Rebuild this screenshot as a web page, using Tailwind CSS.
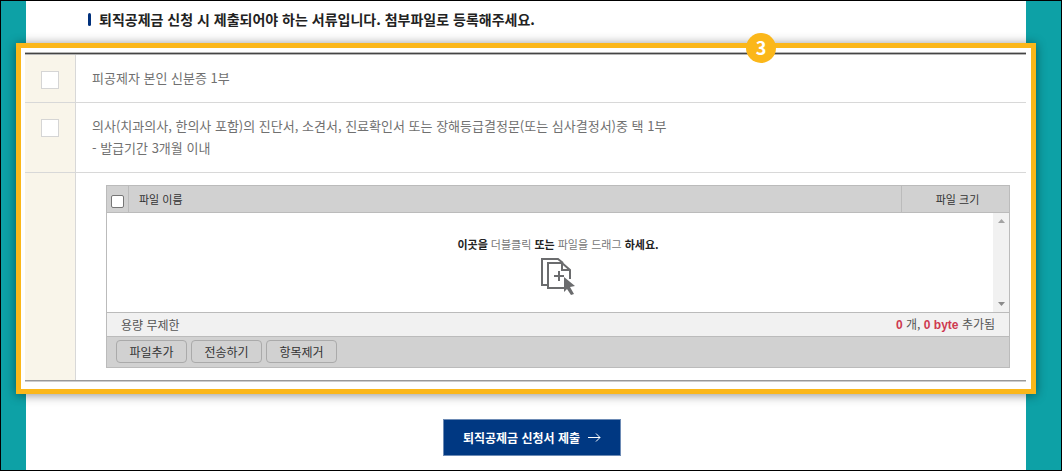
<!DOCTYPE html>
<html lang="ko">
<head>
    <meta charset="UTF-8">
    <meta name="viewport" content="width=device-width, initial-scale=1.0">
    <title>퇴직공제금 신청</title>
    <script src="https://cdn.jsdelivr.net/npm/@tailwindcss/browser@4"></script>
</head>
<body class="flex min-h-screen border border-black bg-[#0da1a6] pr-[35px] pl-[25px] font-['Noto_Sans_CJK_KR',sans-serif] text-[13px] text-[#707070]">
    <main class="flex-1 bg-white">
        <h2 class="flex h-[42px] items-center pb-1.5 pl-[62px] text-sm font-bold text-[#222]">
            <span class="mr-2 h-[13px] w-[3px] rounded-xs bg-[#00307c]"></span>
            퇴직공제금 신청 시 제출되어야 하는 서류입니다. 첨부파일로 등록해주세요.
        </h2>

        <!-- Required documents -->
        <section class="relative -mx-[10px] border-5 border-[#fbb71a] bg-white pt-1 pr-[5px] pb-[7px] pl-1 shadow-[0_1px_10px_rgba(0,0,0,0.45)]">
            <span class="absolute -top-[15px] right-[255px] flex size-[30px] items-center justify-center rounded-full bg-[#fbb71a] pb-0.5 text-lg font-bold text-white">3</span>

            <div class="border-y border-t-[#b5b5b5] border-b-[#ccc]">
                <div class="border-y border-t-[#444] border-b-[#999]">
                    <table class="w-full border-separate border-spacing-0 border-t border-[#b5b5b5]">
                        <tbody>
                            <tr class="h-12">
                                <td class="w-[51px] border-r border-b border-[#d8d8d8] bg-[#f9f5ea] align-top">
                                    <input id="doc-id" type="checkbox" class="mx-auto mt-4 block size-[18px] appearance-none border border-[#d5d5d5] bg-white">
                                </td>
                                <td class="border-b border-[#d8d8d8] pb-0.5 pl-4"><label for="doc-id">피공제자 본인 신분증 1부</label></td>
                            </tr>
                            <tr class="h-[70px]">
                                <td class="border-r border-b border-[#d8d8d8] bg-[#f9f5ea] align-top">
                                    <input id="doc-medical" type="checkbox" class="mx-auto mt-4 block size-[18px] appearance-none border border-[#d5d5d5] bg-white">
                                </td>
                                <td class="border-b border-[#d8d8d8] pb-0.5 pl-4 leading-[22px]">
                                    <label for="doc-medical">의사(치과의사, 한의사 포함)의 진단서, 소견서, 진료확인서 또는 장해등급결정문(또는 심사결정서)중 택 1부<br>- 발급기간 3개월 이내</label>
                                </td>
                            </tr>
                            <tr>
                                <td class="border-r border-[#d8d8d8] bg-[#f9f5ea]"></td>
                                <td class="pt-3 pr-4 pb-3 pl-[30px]">
                                    <!-- File uploader -->
                                    <div class="border border-[#bbb] text-xs leading-4 text-[#555]">
                                        <table class="w-full border-separate border-spacing-0 bg-[#d1d1d1] text-[11px] text-[#333]">
                                            <thead>
                                                <tr class="h-[27px]">
                                                    <th class="w-[22px] border-r border-b border-[#bbb]">
                                                        <input type="checkbox" aria-label="전체 선택" class="mx-auto mt-1 block size-[13px] appearance-none rounded-xs border border-[#767676] bg-white">
                                                    </th>
                                                    <th class="border-b border-[#bbb] pl-[10px] text-left font-normal">파일 이름</th>
                                                    <th class="w-[108px] border-b border-l border-[#bbb] pl-1 font-normal">파일 크기</th>
                                                </tr>
                                            </thead>
                                        </table>
                                        <div class="flex h-[99px]">
                                            <div class="flex flex-1 flex-col items-center pt-[23px] pl-4">
                                                <p class="text-[11px] text-[#777]"><b class="text-[#222]">이곳을</b> 더블클릭 <b class="text-[#222]">또는</b> 파일을 드래그 <b class="text-[#222]">하세요.</b></p>
                                                <svg class="mt-1 h-10 w-9" viewBox="0 0 36 40" fill="none" stroke="#6b6c6e" stroke-width="2">
                                                    <path d="M7 29H2V3H18L23 7"/>
                                                    <path d="M24 32H8V7H22L30 14V23"/>
                                                    <path d="M22 7V14H30M14 20H24M19 15V25"/>
                                                    <path d="M24 21L35 30L30 31L34 38L31 39L27 33L24 36Z" fill="#6b6c6e" stroke="none"/>
                                                </svg>
                                            </div>
                                            <div class="flex w-4 flex-col items-center justify-between bg-[#f1f1f1] py-[6px]">
                                                <svg class="h-1 w-[7px]" viewBox="0 0 7 4" fill="#a3a3a3"><path d="M0 4L3.500 0L7 4Z"/></svg>
                                                <svg class="h-1 w-[7px]" viewBox="0 0 7 4" fill="#8a8a8a"><path d="M0 0L3.500 4L7 0Z"/></svg>
                                            </div>
                                        </div>
                                        <div class="flex h-[25px] items-center justify-between border-y border-[#bbb] bg-[#f1f1f1] px-[14px]">
                                            <span>용량 무제한</span>
                                            <span><b class="font-['Liberation_Sans',sans-serif] text-[#ce3a50]">0</b> 개, <b class="font-['Liberation_Sans',sans-serif] text-[#ce3a50]">0 byte</b> 추가됨</span>
                                        </div>
                                        <div class="flex gap-1 bg-[#d1d1d1] px-[9px] pt-[3px] pb-1 text-[#333]">
                                            <button type="button" class="h-[23px] w-[71px] rounded-sm border border-[#aaa]">파일추가</button>
                                            <button type="button" class="h-[23px] w-[71px] rounded-sm border border-[#aaa]">전송하기</button>
                                            <button type="button" class="h-[23px] w-[71px] rounded-sm border border-[#aaa]">항목제거</button>
                                        </div>
                                    </div>
                                </td>
                            </tr>
                        </tbody>
                    </table>
                </div>
            </div>
        </section>

        <div class="mt-[25px] flex justify-center pl-3">
            <button type="submit" class="flex h-[37px] w-[178px] items-center justify-center gap-2 border border-[#6d8bb5] bg-[#003882] text-xs font-bold text-white">
                퇴직공제금 신청서 제출
                <svg class="h-[9px] w-[13px]" viewBox="0 0 13 9" fill="none" stroke="currentColor"><path d="M0 4.500H12M8 0.500L12 4.500L8 8.500"/></svg>
            </button>
        </div>
    </main>
</body>
</html>
